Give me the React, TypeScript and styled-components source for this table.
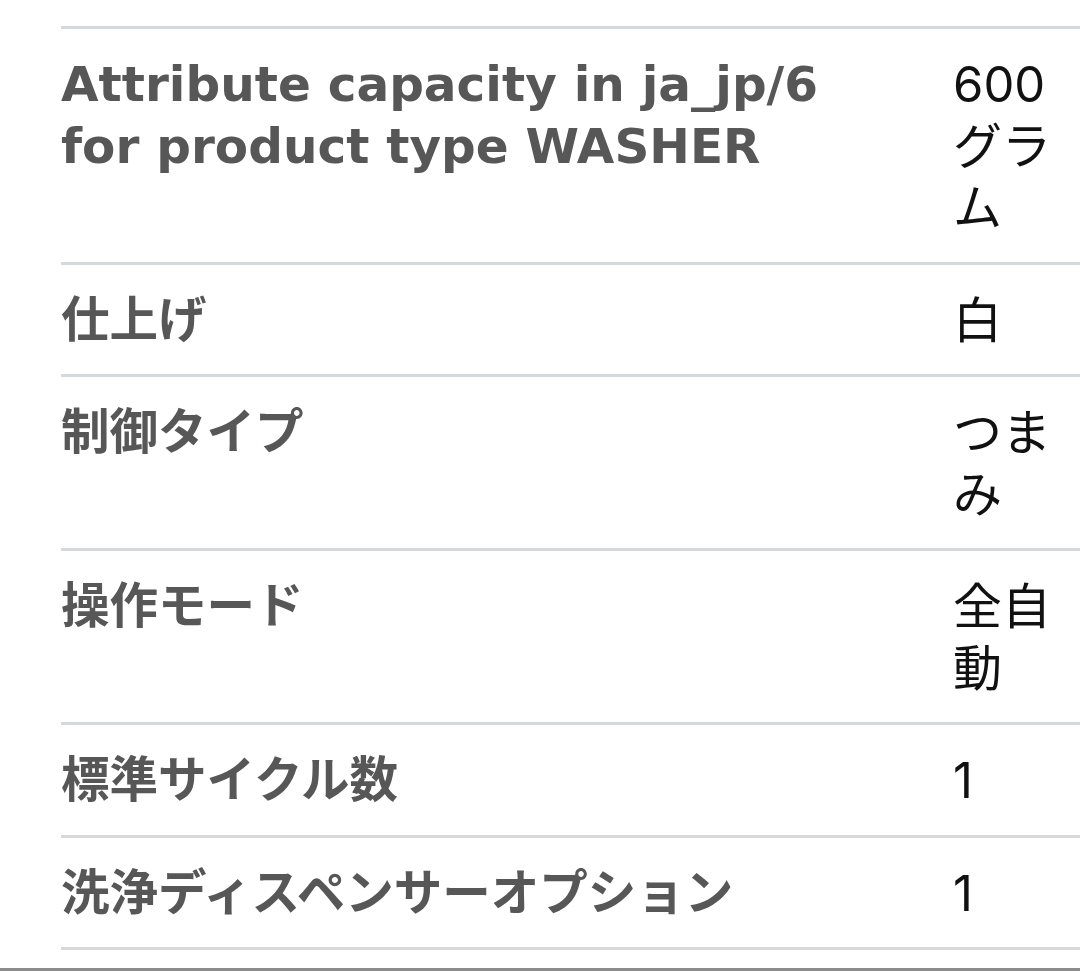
import React from "react";
import styled, { createGlobalStyle } from "styled-components";

const Global = createGlobalStyle`
  html, body { margin: 0; padding: 0; background: #fff; }
  body {
    width: 1080px;
    height: 971px;
    overflow: hidden;
    font-family: "Inter", "Noto Sans CJK JP", sans-serif;
  }
`;

const Page = styled.div`
  position: relative;
  height: 971px;
  padding: 26px 0 0 61px;
  box-sizing: border-box;
`;

const Table = styled.div`
  width: 1019px;
  border-bottom: 3px solid #d6d9dc;
`;

const Row = styled.div`
  display: grid;
  grid-template-columns: 892px 127px;
  border-top: 3px solid #d6d9dc;
  padding: 25px 0 23px;
`;

const Label = styled.div`
  font-family: "DejaVu Sans", "Noto Sans CJK JP", sans-serif;
  font-size: 48.5px;
  line-height: 61.5px;
  font-weight: 700;
  color: #575757;
  padding-right: 70px;
`;

const Value = styled.div`
  font-family: "Inter", "Noto Sans CJK JP", sans-serif;
  font-size: 49px;
  line-height: 61.5px;
  font-weight: 400;
  color: #111111;
`;

const BottomRule = styled.div`
  position: absolute;
  left: 0;
  right: 0;
  top: 968px;
  height: 3px;
  background: #8c8c8c;
`;

const rows: [string, string][] = [
  ["Attribute capacity in ja_jp/6 for product type WASHER", "600グラム"],
  ["仕上げ", "白"],
  ["制御タイプ", "つまみ"],
  ["操作モード", "全自動"],
  ["標準サイクル数", "1"],
  ["洗浄ディスペンサーオプション", "1"],
];

export default function App() {
  return (
    <>
      <Global />
      <Page>
        <Table>
          {rows.map(([k, v]) => (
            <Row key={k}>
              <Label>{k}</Label>
              <Value>{v}</Value>
            </Row>
          ))}
        </Table>
        <BottomRule />
      </Page>
    </>
  );
}
